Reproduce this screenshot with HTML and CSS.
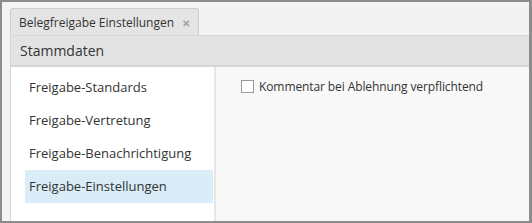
FILE: index.html
```html
<!DOCTYPE html>
<html lang="de">
<head>
  <meta charset="UTF-8">
  <title>Belegfreigabe Einstellungen</title>
  <link rel="stylesheet" href="styles.css">
</head>
<body>

  <div class="window">
    <div class="tab-strip">
      <div class="tab">
        <span class="tab-title">Belegfreigabe Einstellungen</span>
        <span class="tab-close">&#x2715;</span>
      </div>
    </div>
    <div class="panel">
      <div class="panel-header">Stammdaten</div>
      <div class="panel-body">
        <ul class="nav">
          <li class="nav-item">Freigabe-Standards</li>
          <li class="nav-item">Freigabe-Vertretung</li>
          <li class="nav-item">Freigabe-Benachrichtigung</li>
          <li class="nav-item active">Freigabe-Einstellungen</li>
        </ul>
        <div class="content">
          <label class="check">
            <span class="check-box"></span>
            Kommentar bei Ablehnung verpflichtend
          </label>
        </div>
      </div>
    </div>
  </div>

</body>
</html>
```

FILE: styles.css
```css
body {
  margin: 0;
  font-family: 'Open Sans', 'Noto Sans', sans-serif;
  color: #333;
  background: #fff;
}
.window {
  width: 532px;
  height: 223px;
  box-sizing: border-box;
  border: 2px solid #8c8c8c;
  border-right-width: 3px;
  background: #f3f3f3;
  display: flex;
  flex-direction: column;
}
.tab-strip {
  height: 33px;
  display: flex;
  align-items: flex-end;
  padding-left: 8px;
}
.tab {
  height: 28px;
  width: 189px;
  box-sizing: border-box;
  border: 1px solid #cdcdcd;
  border-bottom: none;
  border-radius: 3px 3px 0 0;
  background: #e4e4e4;
  display: flex;
  align-items: center;
  padding-left: 8px;
  font-size: 12px;
  margin-bottom: -1px;
}
.tab-close {
  margin-left: 8px;
  font-size: 10px;
  font-weight: bold;
  color: #a0a0a0;
}
.panel {
  flex: 1;
  margin-left: 8px;
  border-left: 1px solid #d6d6d6;
  display: flex;
  flex-direction: column;
}
.panel-header {
  height: 29px;
  border-top: 1px solid #d8d8d8;
  border-bottom: 2px solid #d6d6d6;
  background: #e3e3e3;
  padding-left: 9px;
  font-size: 14px;
  display: flex;
  align-items: center;
}
.panel-body {
  flex: 1;
  display: flex;
  background: #f8f8f8;
}
.nav {
  list-style: none;
  margin: 0;
  padding: 4px 1px 0 14px;
  width: 188px;
  background: #fff;
  border-right: 2px solid #e6e6e6;
}
.nav-item {
  height: 33px;
  line-height: 33px;
  padding-left: 4px;
  font-size: 13px;
}
.nav-item.active {
  background: #d9ecf8;
}
.content {
  flex: 1;
  padding: 11px 0 0 25px;
}
.check {
  display: flex;
  align-items: center;
  gap: 5px;
  font-size: 12px;
  letter-spacing: -0.1px;
}
.check-box {
  width: 11px;
  height: 11px;
  border: 1px solid #9a9a9a;
  background: #fff;
}
```
